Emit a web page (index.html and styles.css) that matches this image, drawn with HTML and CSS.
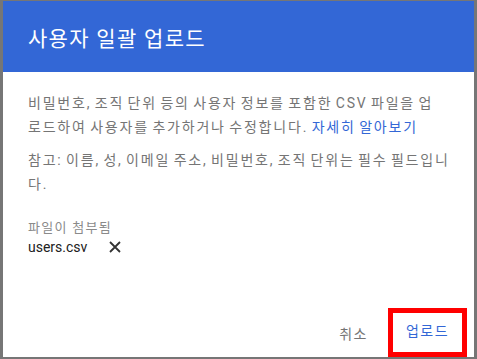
FILE: index.html
```html
<!DOCTYPE html>
<html lang="ko">
<head>
    <meta charset="UTF-8">
    <title>사용자 일괄 업로드</title>
    <link rel="stylesheet" href="styles.css">
</head>
<body>
    <div class="backdrop">
        <div class="dialog">
            <div class="dialog-header">
                <h1 class="dialog-title">사용자 일괄 업로드</h1>
            </div>
            <div class="dialog-body">
                <p class="desc">비밀번호, 조직 단위 등의 사용자 정보를 포함한 CSV 파일을 업<br>로드하여 사용자를 추가하거나 수정합니다. <a class="link" href="#">자세히 알아보기</a></p>
                <p class="desc">참고: 이름, 성, 이메일 주소, 비밀번호, 조직 단위는 필수 필드입니<br>다.</p>
                <div class="file-label">파일이 첨부됨</div>
                <div class="file-row">
                    <span class="file-name">users.csv</span>
                    <svg class="file-remove" width="12" height="12" viewBox="0 0 12 12">
                        <path d="M1 1 L11 11 M11 1 L1 11" stroke="#333" stroke-width="1.8" fill="none"/>
                    </svg>
                </div>
            </div>
            <div class="dialog-footer">
                <button class="btn btn-cancel">취소</button>
                <button class="btn btn-upload">업로드</button>
            </div>
        </div>
    </div>
</body>
</html>
```

FILE: styles.css
```css
html, body {
    margin: 0;
    height: 100%;
}
body {
    background: #767676;
    font-family: Roboto, "Noto Sans CJK KR", sans-serif;
}
.backdrop {
    padding: 1px 0 0 3px;
}
.dialog {
    width: 471px;
    height: 356px;
    background: #fff;
    display: flex;
    flex-direction: column;
}
.dialog-header {
    background: #3367d6;
    height: 71px;
    padding: 0 25px;
    display: flex;
    align-items: center;
}
.dialog-title {
    margin: 0;
    color: #fff;
    font-size: 21px;
    font-weight: 400;
    letter-spacing: 1.3px;
}
.dialog-body {
    padding: 19px 8px 0 25px;
}
.desc {
    margin: 0 0 9px;
    font-size: 14px;
    line-height: 24px;
    color: #757575;
    letter-spacing: 1.8px;
    word-spacing: -1.8px;
}
.link {
    color: #3367d6;
    text-decoration: none;
}
.file-label {
    margin-top: 23px;
    font-size: 13px;
    line-height: 17px;
    color: #8a8a8a;
    letter-spacing: 1.3px;
}
.file-row {
    display: flex;
    align-items: center;
    gap: 22px;
    margin-top: 1px;
    height: 20px;
}
.file-name {
    font-size: 14px;
    color: #212121;
}
.dialog-footer {
    margin-top: auto;
    display: flex;
    justify-content: flex-end;
    align-items: center;
    gap: 20px;
    padding-right: 7px;
}
.btn {
    background: none;
    border: none;
    font-family: inherit;
    font-size: 14px;
    letter-spacing: 1.5px;
    padding: 0;
    cursor: pointer;
}
.btn-cancel {
    color: #757575;
}
.btn-upload {
    color: #3367d6;
    border: 5px solid #ff0000;
    width: 79px;
    height: 49px;
    padding-bottom: 6px;
}
```
